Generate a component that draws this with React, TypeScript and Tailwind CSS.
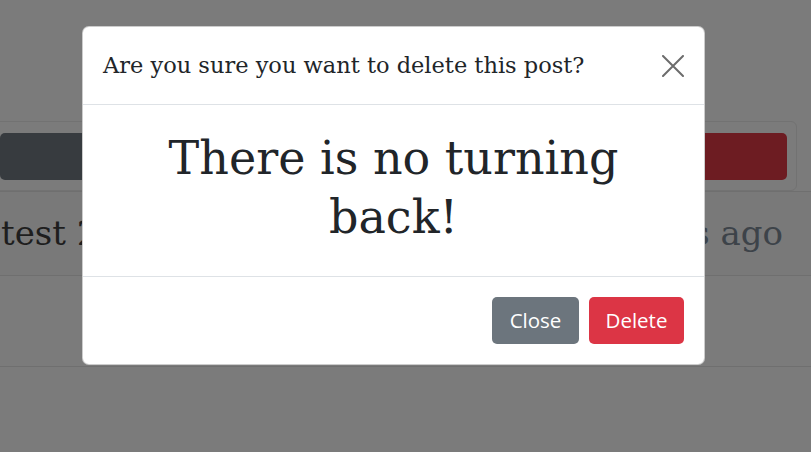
const serif = "font-['DejaVu_Serif',serif]";

const CloseIcon = () => (
  <svg width="22" height="22" viewBox="0 0 22 22" fill="none">
    <path d="M1 1L21 21M21 1L1 21" stroke="#6c6c6c" strokeWidth="2" strokeLinecap="round" />
  </svg>
);

export const DeleteModal = () => (
  <div className="absolute inset-0 flex items-start justify-start pt-[26px] pl-[82px]">
    <div className="w-[623px] rounded-[7px] bg-white border border-black/20 overflow-hidden">
      <div className="flex items-center justify-between h-[78px] px-[20px] border-b border-[#dee2e6]">
        <h5 className={`${serif} text-[22.5px] text-[#212529]`}>
          Are you sure you want to delete this post?
        </h5>
        <button>
          <CloseIcon />
        </button>
      </div>
      <div
        className={`${serif} text-center text-[46px] leading-[59px] text-[#212529] pt-[24px] pb-[29px] px-[20px]`}
      >
        There is no turning back!
      </div>
      <div className="flex justify-end gap-[10px] h-[88px] items-center px-[20px] border-t border-[#dee2e6] font-['Open_Sans',sans-serif] text-[20.5px] text-white">
        <button className="h-[47px] w-[87px] rounded-[5px] bg-[#6c757d]">
          Close
        </button>
        <button className="h-[47px] w-[95px] rounded-[5px] bg-[#dc3545]">
          Delete
        </button>
      </div>
    </div>
  </div>
);

export default function App() {
  return (
    <div className="relative h-[452px] w-[811px] overflow-hidden bg-[#7b7b7b]">
      <div className="flex flex-col">
        <div className="h-[121px]" />
        <div className="ml-[-14px] mr-[14px] h-[70px] border border-[#727272] rounded-[6px] flex items-center justify-between pl-[13px] pr-[9px]">
          <div className="h-[47px] w-[300px] rounded-[5px] bg-[#373b3f]" />
          <div className="h-[47px] w-[300px] rounded-[5px] bg-[#6d1c22]" />
        </div>
        <div
          className={`${serif} flex items-center justify-between h-[85px] bg-[#797979] border-y border-[#6f6f6f] text-[34px]`}
        >
          <span className="text-[#1e1e1e] pl-[1px]">test 2</span>
          <span className="text-[#3d4349] pr-[28px]">days ago</span>
        </div>
        <div className="h-[91px] border-b border-[#6f6f6f]" />
      </div>
      <DeleteModal />
    </div>
  );
}
